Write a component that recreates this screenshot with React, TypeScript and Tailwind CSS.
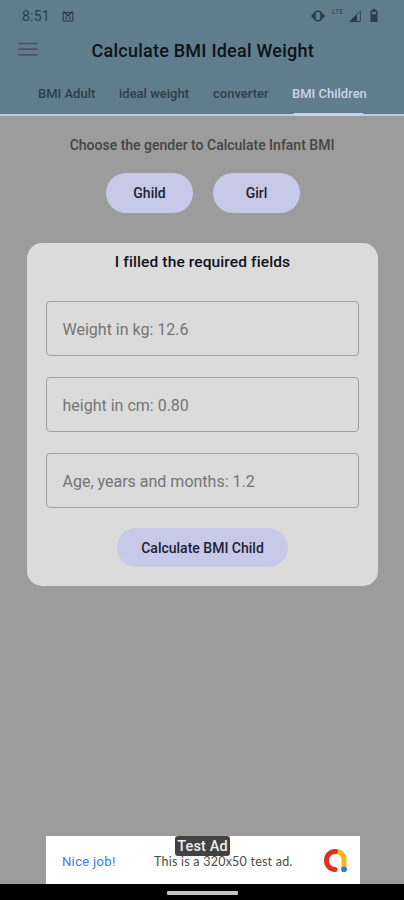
import React from "react";

const tabs = [
  { label: "BMI Adult", box: "ml-[38px] w-[59px]" },
  { label: "ideal weight", box: "ml-[22px] w-[71px]" },
  { label: "converter", box: "ml-[23px] w-[56px]" },
];

const fields = ["Weight in kg: 12.6", "height in cm: 0.80", "Age, years and months: 1.2"];

function StatusBar() {
  return (
    <div className="flex h-[31px] items-center pl-[22px] pr-[26px] text-[#2c3d49]">
      <span className="text-[14px] leading-none tracking-[0.2px]">8:51</span>
      <svg className="ml-[12px]" width="12" height="12" viewBox="0 0 12 12" fill="none" stroke="currentColor">
        <rect x="1.200" y="2.500" width="9.600" height="8.500" strokeWidth="1.100" />
        <path d="M1.500 1.500 6 5.800 10.500 1.500M4 9.500V6.500M8 9.500V6.500" strokeWidth="1.300" />
      </svg>
      <div className="flex-1" />
      <svg width="16" height="12" viewBox="0 0 16 12" fill="currentColor">
        <path d="M4.800 2v8L.8 6zM11.200 2v8L15.200 6z" />
        <rect x="5" y="1.300" width="6" height="9.400" rx="2.500" fill="none" stroke="currentColor" strokeWidth="1.500" />
      </svg>
      <span className="mb-[7px] ml-[6px] w-[13px] text-[7px] leading-none tracking-[0.2px]">LTE</span>
      <svg className="ml-[4px]" width="12" height="12" viewBox="0 0 12 12">
        <path d="M0 12 8 4v8z" fill="currentColor" />
        <path d="M1 11.500 11.400 1v10.500z" fill="none" stroke="currentColor" strokeWidth="0.900" />
      </svg>
      <svg className="ml-[9px]" width="8" height="13" viewBox="0 0 8 13" fill="currentColor">
        <path d="M2.500 0h3v1.500h2V13h-7V1.500h2z" />
        <rect x="2" y="3" width="4" height="2.200" fill="#607d8e" />
      </svg>
    </div>
  );
}

function Header() {
  return (
    <header className="flex h-[116px] flex-col border-b-2 border-[#c5ccd7] bg-[#607d8e]">
      <StatusBar />
      <div className="flex h-[39px] items-center pl-[18px]">
        <svg className="mb-[4px]" width="20" height="14" viewBox="0 0 20 14" stroke="#504e60" strokeWidth="1.700">
          <path d="M.5 1.500h19M.5 7.200h19M.5 12.800h19" />
        </svg>
        <h1 className="ml-[53.500px] whitespace-nowrap text-[18px] font-medium leading-none tracking-[0.240px] text-[#0d1219]">
          Calculate BMI Ideal Weight
        </h1>
      </div>
      <nav className="flex h-[44px] text-[13px] font-medium leading-[47px]">
        {tabs.map((t) => (
          <a key={t.label} className={`${t.box} whitespace-nowrap text-[#2d3e49]`}>{t.label}</a>
        ))}
        <a className="relative ml-[23px] w-[76px] whitespace-nowrap text-[#ccd3ed]">
          BMI Children
          <span className="absolute left-[1px] top-[43px] h-[3px] w-[71px] rounded-t-[2px] bg-[#c9cfec]" />
        </a>
      </nav>
    </header>
  );
}

function AdBanner() {
  return (
    <div className="relative ml-[46px] flex h-[48px] w-[314px] items-center bg-white">
      <span className="ml-[16px] mt-[2px] w-[92px] whitespace-nowrap text-[13px] leading-none tracking-[0.350px] text-[#3d79e5]">
        Nice job!
      </span>
      <span className="mt-[4px] w-[169px] whitespace-nowrap font-['Lato',sans-serif] text-[12.500px] leading-none tracking-[0.230px] text-[#4b4b4b]">
        This is a 320x50 test ad.
      </span>
      <svg width="25" height="25" viewBox="0 0 25 25" fill="none" strokeWidth="5" strokeLinecap="round">
        <path d="M12.500 3.500c5.500 0 8.500 3.500 8.500 9v7" stroke="#fbb90b" />
        <path d="M12.500 3.500C7 3.300 3.500 7.500 3.500 12.500s3.500 9 8.500 9" stroke="#e32f28" />
        <circle cx="21" cy="21.300" r="2.900" fill="#2c7de0" />
      </svg>
      <span className="absolute left-[129px] top-0 h-[20px] w-[55px] whitespace-nowrap rounded-[3px] bg-[#424242] text-center text-[14.500px] font-medium leading-[21px] tracking-[0.100px] text-[#eeeeee]">
        Test Ad
      </span>
    </div>
  );
}

export default function App() {
  return (
    <div className="flex h-[900px] w-[404px] flex-col overflow-hidden bg-[#9c9c9c] font-['Roboto',sans-serif]">
      <Header />
      <main className="flex flex-1 flex-col">
        <p className="mt-[20px] text-center text-[14px] font-medium leading-[18px] text-[#444444]">
          Choose the gender to Calculate Infant BMI
        </p>
        <div className="ml-[106px] mt-[19px] flex gap-[20px] text-[14px] font-medium text-[#202333]">
          <button className="h-[40px] w-[87px] rounded-full bg-[#c6c9e8] pt-[1px]">Ghild</button>
          <button className="h-[40px] w-[87px] rounded-full bg-[#c6c9e8] pt-[1px]">Girl</button>
        </div>
        <section className="ml-[27px] mt-[30px] flex h-[343px] w-[351px] flex-col rounded-[15px] bg-[#dbdbdb] px-[19px]">
          <h2 className="mt-[9px] text-center text-[15.500px] font-medium leading-[20px] tracking-[0.120px] text-[#11111d]">
            I filled the required fields
          </h2>
          <div className="mt-[29px] flex flex-col gap-[21px]">
            {fields.map((label) => (
              <div
                key={label}
                className="flex h-[55px] items-center rounded-[4px] border border-[#a0a0a0] pl-[15.500px] pt-[2px] text-[16px] text-[#757575]"
              >
                {label}
              </div>
            ))}
          </div>
          <button className="mt-[20px] h-[39px] w-[171px] self-center rounded-full bg-[#c6c9e8] pt-[1px] text-[14px] font-medium text-[#202333]">
            Calculate BMI Child
          </button>
        </section>
      </main>
      <AdBanner />
      <footer className="flex h-[16px] justify-center bg-black pt-[7px]">
        <span className="h-[4px] w-[71px] rounded-[1px] bg-[#c4c4c4]" />
      </footer>
    </div>
  );
}
